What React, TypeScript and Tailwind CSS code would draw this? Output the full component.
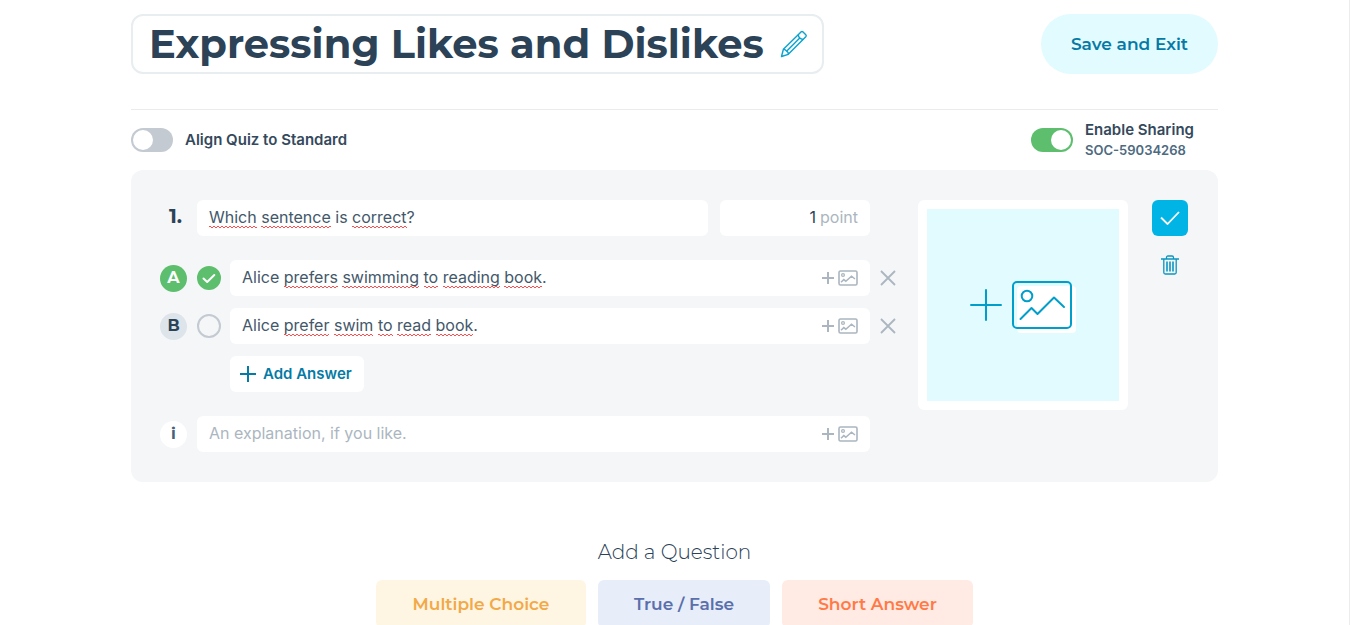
import { useState } from "react";

interface IAnswer {
  letter: string;
  text: string;
}

interface IWord {
  text: string;
  misspelled: boolean;
}

const initialAnswers: IAnswer[] = [
  { letter: "A", text: "Alice prefers swimming to reading book." },
  { letter: "B", text: "Alice prefer swim to read book." },
];

const knownWords = ["Alice", "is"];

const splitWords = (value: string): IWord[] =>
  value
    .split(/([A-Za-z]+)/)
    .filter(Boolean)
    .map((text) => ({
      text,
      misspelled: /^[A-Za-z]+$/.test(text) && !knownWords.includes(text),
    }));

const PencilIcon = () => (
  <svg width="28" height="28" viewBox="0 0 28 28" fill="none" stroke="#0aa2cf" strokeWidth="1.4" strokeLinejoin="round">
    <path d="M1.5 26.5 3.4 19.2 21 1.9Q22 1.1 23 1.9L25.8 4.7Q26.7 5.7 25.8 6.7L8.3 24.3Z" />
    <path d="M3.4 19.2 5.2 19.8 8.1 22.6 8.3 24.3M18.2 4.7Q18.8 8.9 23.1 9.5" />
    <path d="M6.6 21.2 20 7.8" />
  </svg>
);

const PlusImageIcon = () => (
  <svg width="38" height="18" viewBox="0 0 38 18" fill="none" stroke="#abb6c0">
    <path d="M0 9H12M6 3V15" strokeWidth="2" />
    <rect x="17" y="2" width="18" height="14" rx="1.5" strokeWidth="1.6" />
    <circle cx="21" cy="6" r="1.4" strokeWidth="1.3" />
    <path d="M19 13.2 21.8 10.6 23.8 12.2 29.5 7.2 33 10" strokeWidth="1.5" />
  </svg>
);

const UploadIcon = () => (
  <svg width="106" height="50" viewBox="0 0 106 50" fill="none" className="overflow-visible">
    <rect x="47" y="6" width="59" height="47" rx="4" fill="#fff" />
    <rect x="43" y="2" width="58" height="46" rx="4" stroke="#009fcb" strokeWidth="2" />
    <g stroke="#009fcb" strokeWidth="2" strokeLinecap="round">
      <path d="M1 25H31M16 10V40" />
      <circle cx="57" cy="16" r="5.3" />
      <path d="M50.5 39 61.5 28 67.5 34 84 17.5 94 27" strokeLinejoin="round" />
    </g>
  </svg>
);

const TrashIcon = () => (
  <svg width="18" height="20" viewBox="0 0 18 20" fill="none" stroke="#0a96c1" strokeWidth="1.3">
    <path d="M0 4H18M5.5 4V2.5Q5.5 1 7 1H11Q12.5 1 12.5 2.5V4M2.8 4V17.5Q2.8 19 4.3 19H13.7Q15.2 19 15.2 17.5V4" />
    <path d="M6 6.5V16.5M9 6.5V16.5M12 6.5V16.5" strokeWidth="1.6" />
  </svg>
);

interface ITextFieldProps {
  label: string;
  value: string;
  setValue: (value: string) => void;
  placeholder?: string;
  withImage?: boolean;
}

const TextField: React.FC<ITextFieldProps> = ({
  label,
  value,
  setValue,
  placeholder,
  withImage,
}) => {
  return (
    <div className="flex h-9 min-w-0 flex-1 items-center rounded-md bg-white px-3">
      <div className="relative min-w-0 flex-1 pb-0.5">
        <input
          type="text"
          aria-label={label}
          value={value}
          placeholder={placeholder}
          spellCheck={false}
          onChange={(e) => setValue(e.target.value)}
          className="block h-6 w-full bg-transparent text-base leading-6 text-[#43586a] outline-none placeholder:text-[#abb6c0]"
        />
        {/* spelling marks */}
        <div
          aria-hidden="true"
          className="pointer-events-none absolute inset-0 overflow-hidden text-base leading-6 whitespace-pre text-transparent"
        >
          {splitWords(value).map((word, i) => (
            <span
              key={i}
              className={
                word.misspelled
                  ? "bg-[linear-gradient(90deg,#ff4d4d_2px,#ffffff00_2px),linear-gradient(90deg,#ff4d4d_2px,#ffffff00_2px)] bg-[length:4px_1px,4px_1px] bg-[position:0_calc(100%-1px),2px_100%] bg-repeat-x pb-px"
                  : ""
              }
            >
              {word.text}
            </span>
          ))}
        </div>
      </div>
      {withImage && (
        <button type="button" aria-label="Add image" className="-mr-0.5">
          <PlusImageIcon />
        </button>
      )}
    </div>
  );
};

interface IToggleProps {
  id: string;
  checked: boolean;
  setChecked: (checked: boolean) => void;
}

const Toggle: React.FC<IToggleProps> = ({ id, checked, setChecked }) => (
  <input
    id={id}
    type="checkbox"
    role="switch"
    checked={checked}
    onChange={(e) => setChecked(e.target.checked)}
    className="flex h-6 w-[42px] shrink-0 appearance-none rounded-full bg-[#c3cad1] p-0.5 before:size-5 before:rounded-full before:bg-white checked:justify-end checked:bg-[#5dbe6e]"
  />
);

export default function App() {
  const [title, setTitle] = useState("Expressing Likes and Dislikes");
  const [aligned, setAligned] = useState(false);
  const [sharing, setSharing] = useState(true);
  const [question, setQuestion] = useState("Which sentence is correct?");
  const [points, setPoints] = useState("1");
  const [answers, setAnswers] = useState(initialAnswers);
  const [correct, setCorrect] = useState("A");
  const [explanation, setExplanation] = useState("");

  const updateAnswer = (letter: string, text: string) => {
    setAnswers(answers.map((a) => (a.letter === letter ? { ...a, text } : a)));
  };

  return (
    <div className="min-h-screen border-r border-[#ececee] bg-white pt-3.5 font-['Inter',sans-serif] text-[#2b4257]">
      <main className="mx-auto max-w-[1087px]">
        {/* Title */}
        <header className="flex items-center justify-between border-b border-[#e8ecef] pb-[35px]">
          <div className="flex h-[60px] w-[693px] items-center rounded-xl border-2 border-[#e8edf0] pr-3.5 pl-4">
            <input
              type="text"
              aria-label="Quiz title"
              value={title}
              onChange={(e) => setTitle(e.target.value)}
              spellCheck={false}
              className="h-14 min-w-0 flex-1 bg-transparent font-['Montserrat',sans-serif] text-[40px] font-bold outline-none"
            />
            <button type="button" aria-label="Edit title">
              <PencilIcon />
            </button>
          </div>
          <button
            type="button"
            className="h-[60px] w-[177px] rounded-full bg-[#e2fbff] pt-0.5 font-['Montserrat',sans-serif] text-[17px] font-semibold text-[#047aa5]"
          >
            Save and Exit
          </button>
        </header>

        {/* Options */}
        <div className="flex h-[60px] items-center justify-between">
          <div className="flex items-center gap-3">
            <Toggle id="align" checked={aligned} setChecked={setAligned} />
            <label htmlFor="align" className="text-[15px] font-semibold text-[#34495c]">
              Align Quiz to Standard
            </label>
          </div>
          <div className="flex w-[187px] items-center gap-3">
            <Toggle id="sharing" checked={sharing} setChecked={setSharing} />
            <label htmlFor="sharing" className="flex flex-col">
              <span className="text-[15px] leading-5 font-semibold text-[#34495c]">
                Enable Sharing
              </span>
              <span className="text-[13px] leading-5 font-semibold text-[#4d6a80]">
                SOC-59034268
              </span>
            </label>
          </div>
        </div>

        {/* Question */}
        <section className="flex rounded-xl bg-[#f5f6f8] py-[30px] pr-[30px] pl-[29px]">
          <div className="flex min-w-0 flex-1 flex-col gap-6">
            <div className="flex items-center gap-3 pr-12">
              <div className="flex min-w-0 flex-1 items-center gap-2.5">
                <span className="w-[27px] pr-[5px] pb-1 text-right font-['Montserrat',sans-serif] text-xl font-bold">
                  1.
                </span>
                <TextField label="Question" value={question} setValue={setQuestion} />
              </div>
              <label className="flex h-9 w-[150px] items-center gap-1 rounded-md bg-white px-3 pb-0.5">
                <input
                  type="text"
                  inputMode="numeric"
                  value={points}
                  onChange={(e) => setPoints(e.target.value)}
                  className="min-w-0 flex-1 bg-transparent text-right outline-none"
                />
                <span className="text-[#abb6c0]">point</span>
              </label>
            </div>

            <div className="flex flex-col gap-3">
              {answers.map((answer) => (
                <div key={answer.letter} className="flex items-center">
                  <span
                    className={`flex size-[27px] items-center justify-center rounded-full font-['Montserrat',sans-serif] text-base font-bold ${
                      correct === answer.letter
                        ? "bg-[#5dbe6e] text-white"
                        : "bg-[#dde4ea] text-[#2b4257]"
                    }`}
                  >
                    {answer.letter}
                  </span>
                  <div className="relative mr-[9px] ml-2.5 size-6">
                    <input
                      type="radio"
                      name="correct"
                      aria-label={`Answer ${answer.letter} is correct`}
                      checked={correct === answer.letter}
                      onChange={() => setCorrect(answer.letter)}
                      className="block size-6 appearance-none rounded-full border-2 border-[#c3cad1] checked:border-[#5dbe6e] checked:bg-[#5dbe6e]"
                    />
                    {correct === answer.letter && (
                      <svg
                        viewBox="0 0 24 24"
                        className="pointer-events-none absolute inset-0 size-6"
                        fill="none"
                        stroke="#fff"
                        strokeWidth="2"
                        strokeLinecap="round"
                        strokeLinejoin="round"
                      >
                        <path d="M6.5 12.5 10.2 16 17.3 9" />
                      </svg>
                    )}
                  </div>
                  <TextField
                    label={`Answer ${answer.letter}`}
                    value={answer.text}
                    setValue={(text) => updateAnswer(answer.letter, text)}
                    withImage
                  />
                  <button
                    type="button"
                    aria-label={`Remove answer ${answer.letter}`}
                    onClick={() => setAnswers(answers.filter((a) => a !== answer))}
                    className="mr-3 flex h-9 w-9 items-center justify-center"
                  >
                    <svg width="16" height="16" viewBox="0 0 16 16" stroke="#abb6c0" strokeWidth="1.8">
                      <path d="M1 1 15 15M15 1 1 15" />
                    </svg>
                  </button>
                </div>
              ))}
              <button
                type="button"
                className="ml-[70px] flex h-9 w-[134px] items-center gap-[7px] rounded-md bg-white pl-2.5 text-[15px] font-semibold text-[#047aa5]"
              >
                <svg width="16" height="16" viewBox="0 0 16 16" stroke="currentColor" strokeWidth="2">
                  <path d="M0 8H16M8 0V16" />
                </svg>
                Add Answer
              </button>
            </div>

            <div className="flex items-center gap-2.5 pr-12">
              <span className="flex size-[27px] items-center justify-center rounded-full bg-white font-['Montserrat',sans-serif] text-base font-bold text-[#47617a]">
                i
              </span>
              <TextField
                label="Explanation"
                value={explanation}
                setValue={setExplanation}
                placeholder="An explanation, if you like."
                withImage
              />
            </div>
          </div>

          <button
            type="button"
            aria-label="Add question image"
            className="mr-6 flex size-[210px] items-center justify-center rounded-md border-[9px] border-white bg-[#e2fbff]"
          >
            <UploadIcon />
          </button>

          <div className="flex flex-col items-center gap-[19px]">
            <button
              type="button"
              aria-label="Save question"
              className="flex size-9 items-center justify-center rounded-md bg-[#00b5e5]"
            >
              <svg width="20" height="14" viewBox="0 0 20 14" fill="none" stroke="#fff" strokeWidth="1.8">
                <path d="M1 6.5 7.5 13 19 1" />
              </svg>
            </button>
            <button type="button" aria-label="Delete question">
              <TrashIcon />
            </button>
          </div>
        </section>

        {/* Question types */}
        <h2 className="mt-14 text-center font-['Montserrat',sans-serif] text-xl font-light">
          Add a Question
        </h2>
        <div className="mt-3.5 flex justify-center gap-3 font-['Montserrat',sans-serif] text-[17px] font-semibold">
          <button type="button" className="h-12 w-[210px] rounded-md bg-[#fff5e3] pt-0.5 text-[#f2a947]">
            Multiple Choice
          </button>
          <button type="button" className="h-12 w-[172px] rounded-md bg-[#e7edf9] pt-0.5 text-[#5a6fab]">
            True / False
          </button>
          <button type="button" className="h-12 w-[191px] rounded-md bg-[#ffeae4] pt-0.5 text-[#ff7a47]">
            Short Answer
          </button>
        </div>
      </main>
    </div>
  );
}
